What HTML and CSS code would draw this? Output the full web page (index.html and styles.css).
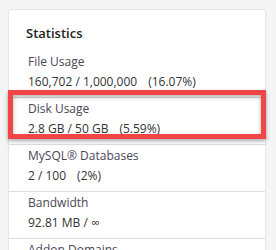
FILE: index.html
```html
<!DOCTYPE html>
<html lang="en">
<head>
    <meta charset="UTF-8">
    <meta name="viewport" content="width=device-width, initial-scale=1.0">
    <title>Statistics</title>
    <link rel="stylesheet" href="styles.css">
</head>
<body>
    <div class="stats-card">
        <h3>Statistics</h3>
        <div class="stat-row">
            <div class="stat-label">File Usage</div>
            <div class="stat-value">160,702 / 1,000,000<span class="pct">(16.07%)</span></div>
        </div>
        <div class="stat-row">
            <div class="stat-label">Disk Usage</div>
            <div class="stat-value">2.8 GB / 50 GB<span class="pct">(5.59%)</span></div>
        </div>
        <div class="stat-row">
            <div class="stat-label">MySQL® Databases</div>
            <div class="stat-value">2 / 100<span class="pct">(2%)</span></div>
        </div>
        <div class="stat-row">
            <div class="stat-label">Bandwidth</div>
            <div class="stat-value">92.81 MB / ∞</div>
        </div>
        <div class="stat-row">
            <div class="stat-label">Addon Domains</div>
            <div class="stat-value">0 / ∞</div>
        </div>

        <!-- highlight marker drawn over the disk usage row -->
        <div class="highlight"></div>
    </div>
</body>
</html>
```

FILE: styles.css
```css
body {
    font-family: 'Open Sans', sans-serif;
    background-color: #f5f5f5;
    margin: 0;
    padding: 0;
    color: #333;
    height: 250px;
    overflow: hidden;
}

.stats-card {
    position: relative;
    background: #fff;
    margin: 9px 10px 0 8px;
    padding-top: 13px;
    border: 1px solid #e6e6e6;
    border-radius: 3px;
    box-shadow: 0 1px 2px rgba(0, 0, 0, 0.05);
}

.stats-card h3 {
    margin: 0 0 8px;
    padding-left: 17px;
    font-size: 13px;
    font-weight: 600;
    line-height: 20px;
    color: #222;
}

.stat-row {
    padding: 1px 0 5px 19px;
    border-bottom: 1px solid #ddd;
    font-size: 12px;
    line-height: 20px;
}

.stat-label {
    color: #4a4656;
}

.stat-value {
    color: #333;
}

.stat-value .pct {
    margin-left: 11px;
}

.highlight {
    position: absolute;
    left: -1px;
    top: 80px;
    width: 248px;
    height: 39px;
    border: 5px solid #f24646;
    box-shadow: 0 2px 4px rgba(0, 0, 0, 0.35), inset 0 2px 4px rgba(0, 0, 0, 0.3);
}
```
